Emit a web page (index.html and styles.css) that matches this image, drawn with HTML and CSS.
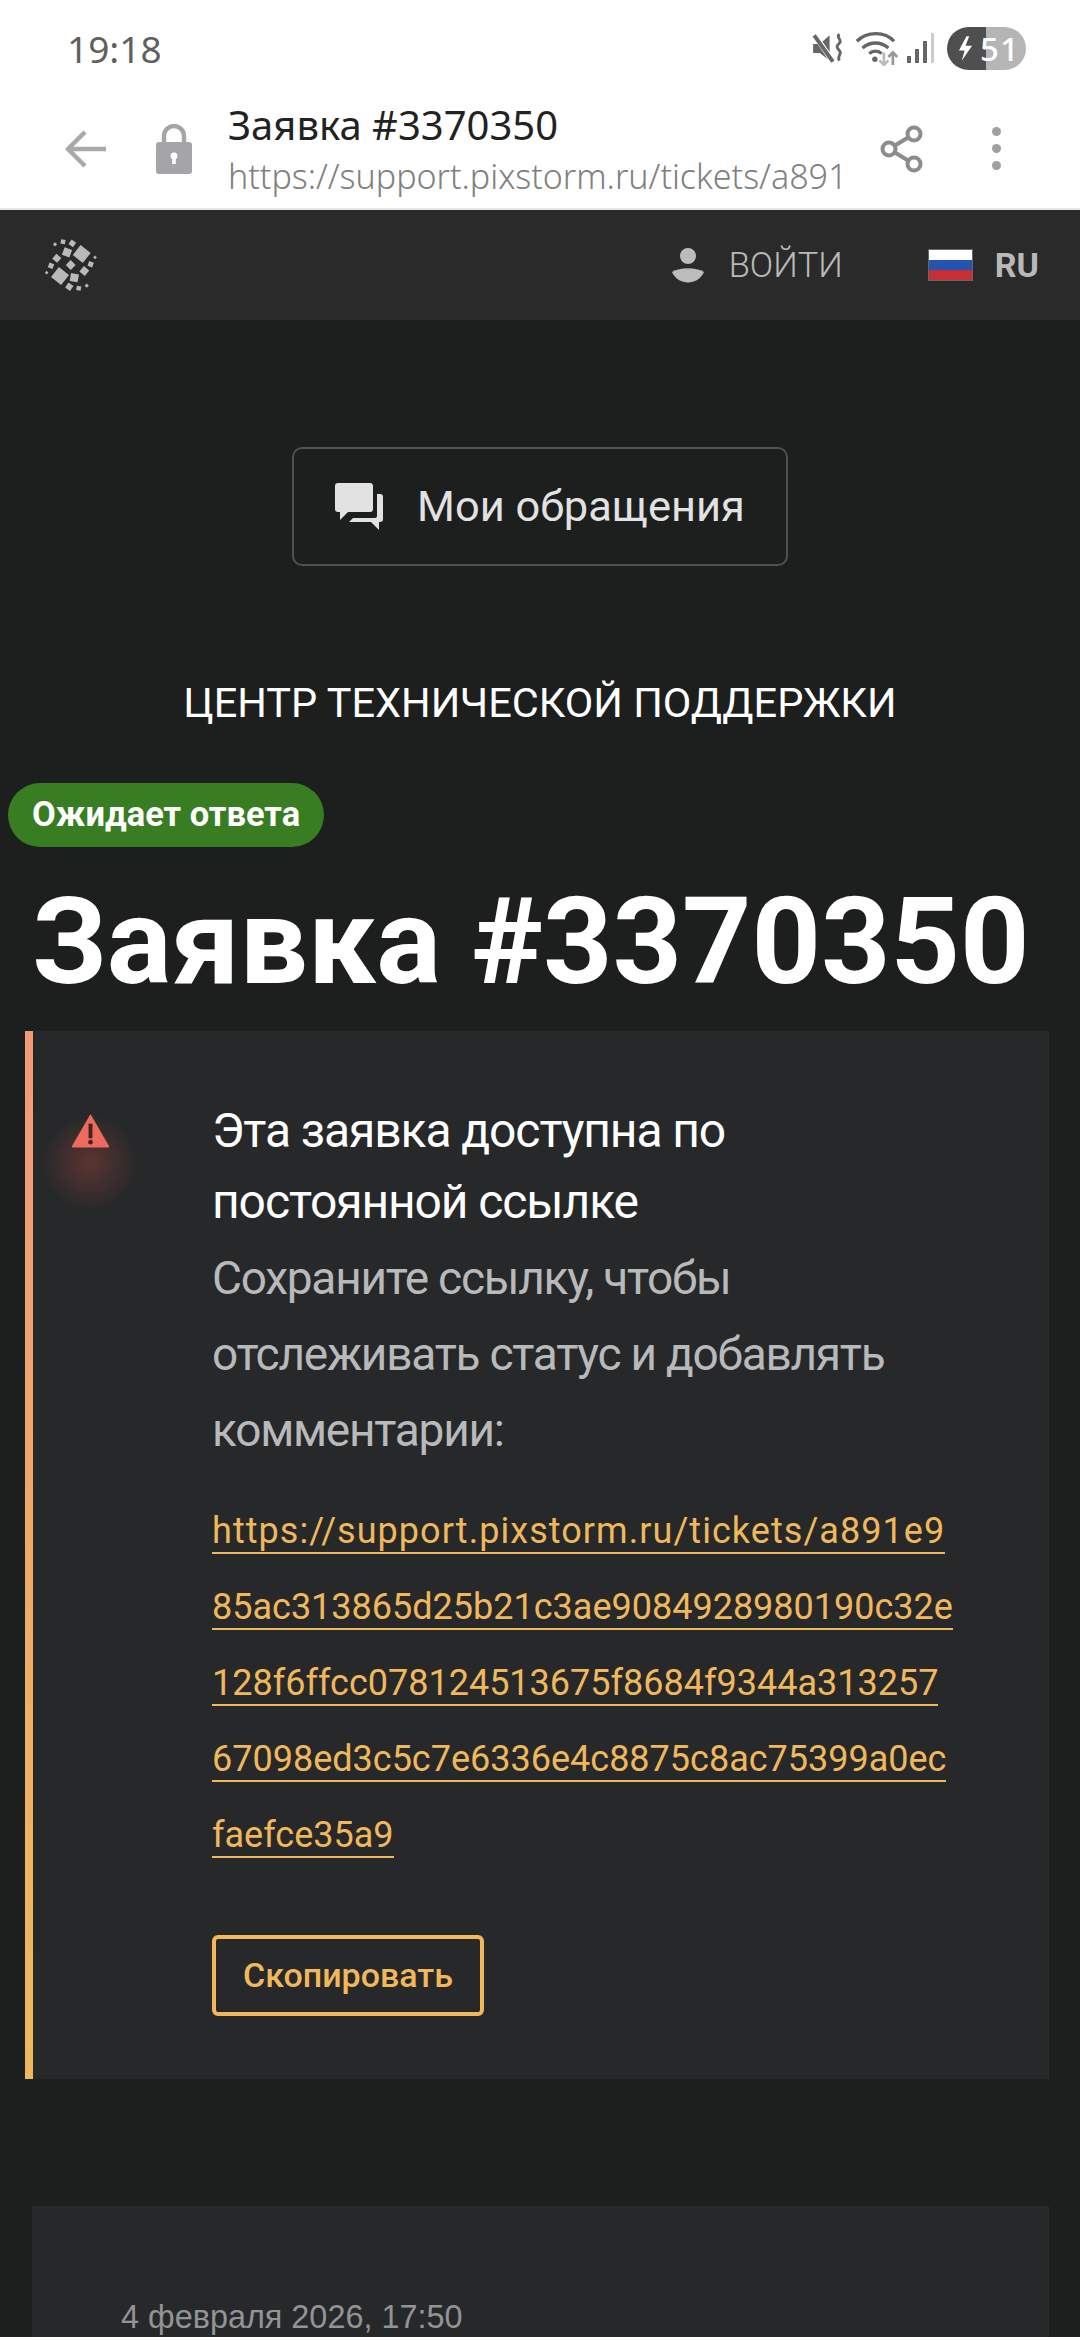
FILE: index.html
```html
<!DOCTYPE html>
<html lang="ru">
<head>
<meta charset="utf-8">
<title>Заявка #3370350</title>
<link rel="stylesheet" href="styles.css">
</head>
<body>
<div class="phone">
  <div class="statusbar">
    <span class="clock">19:18</span>
    <div class="status-icons">
      <svg class="i-mute" viewBox="0 0 30 30"><path d="M1 11h6l9-8v23l-9-7H1z" fill="#666"/><path d="M2 2l17 25" stroke="#fff" stroke-width="5"/><path d="M2 3l17 24" stroke="#666" stroke-width="3.5"/><path d="M25 2c-4 3 3 5 0 8s-3 4 0 7-3 5 0 9" fill="none" stroke="#666" stroke-width="2.6"/></svg>
      <svg class="i-wifi" viewBox="0 0 38 32"><g fill="none" stroke="#666" stroke-width="3"><path d="M2 10c9-9 25-9 33 0"/><path d="M7 16c7-6 16-6 23 0"/><path d="M13 21c3-3 8-3 11 0"/></g><circle cx="18" cy="26" r="2.4" fill="#666"/><g fill="none" stroke="#bbb" stroke-width="2.4"><path d="M26 20v11M22 27l4 4 4-4"/></g><g fill="none" stroke="#999" stroke-width="2.4"><path d="M34 31V20M30 24l4-4 4 4"/></g></svg>
      <svg class="i-signal" viewBox="0 0 28 30"><rect x="1" y="23" width="4" height="7" fill="#666"/><rect x="9" y="16" width="4" height="14" fill="#666"/><rect x="17" y="8" width="4" height="22" fill="#666"/><rect x="25" y="0" width="3" height="30" fill="#ccc"/></svg>
      <div class="battery"><svg class="i-bolt" viewBox="0 0 16 26"><path d="M9 0 1 15h6l-3 11 11-16H8l4-10z" fill="#fff"/></svg><span class="battery-num">51</span></div>
    </div>
  </div>
  <div class="urlbar">
    <svg class="i-back" viewBox="0 0 44 44"><path d="M43 22H6M22 5 5 22l17 17" fill="none" stroke="#a9a9ac" stroke-width="4.4"/></svg>
    <svg class="i-lock" viewBox="0 0 36 50"><path d="M8 20v-8a10 10 0 0 1 20 0v8" fill="none" stroke="#a5a5a8" stroke-width="4.4"/><path d="M3 18h30a3 3 0 0 1 3 3v26a3 3 0 0 1-3 3H3a3 3 0 0 1-3-3V21a3 3 0 0 1 3-3z" fill="#a5a5a8"/><circle cx="18" cy="32" r="3.4" fill="#fff"/><rect x="16.2" y="32" width="3.6" height="8" fill="#fff"/></svg>
    <div class="url-text">
      <div class="url-title">Заявка #3370350</div>
      <div class="url-addr">https://support.pixstorm.ru/tickets/a891</div>
    </div>
    <svg class="i-share" viewBox="0 0 44 48"><g fill="none" stroke="#8c8c8f" stroke-width="4"><circle cx="34" cy="9" r="6.5"/><circle cx="9" cy="24" r="6.5"/><circle cx="34" cy="39" r="6.5"/><path d="M15 20.500 28 12.500M15 27.500 28 35.500"/></g></svg>
    <div class="kebab"><i></i><i></i><i></i></div>
  </div>
  <header class="siteheader">
    <svg class="logo" viewBox="20 20 60 60"><g fill="#b9b9b9">
      <rect x="55.3" y="32.600" width="12.800" height="12.800" transform="rotate(38 61.700 39)"/>
      <rect x="33.600" y="54.600" width="12.800" height="12.800" transform="rotate(38 40 61)"/>
      <rect x="43" y="33.300" width="8" height="8" transform="rotate(20 47 37.300)"/>
      <rect x="33.500" y="40" width="6.500" height="6.500" transform="rotate(40 36.700 43.300)"/>
      <rect x="47.200" y="46.500" width="7" height="7" transform="rotate(45 50.700 50)"/>
      <rect x="28.500" y="48.200" width="5" height="5" transform="rotate(20 31 50.700)"/>
      <rect x="60.800" y="52.500" width="7" height="7" transform="rotate(40 64.300 56)"/>
      <rect x="50.300" y="58.700" width="8" height="8" transform="rotate(10 54.300 62.700)"/>
      <rect x="68.200" y="46.800" width="5" height="5" transform="rotate(20 70.700 49.300)"/>
      <rect x="46.300" y="68.700" width="6" height="6" transform="rotate(35 49.300 71.700)"/>
      <rect x="56.500" y="71" width="4.500" height="4.500" transform="rotate(10 58.700 73.300)"/>
      <rect x="65.200" y="69.200" width="3" height="3" transform="rotate(45 66.700 70.700)"/>
      <rect x="40.800" y="24.500" width="4.500" height="4.500" transform="rotate(10 43 26.700)"/>
      <rect x="49.600" y="25.600" width="5.500" height="5.500" transform="rotate(35 52.300 28.300)"/>
      <rect x="33.500" y="27.800" width="3" height="3" transform="rotate(45 35 29.300)"/>
      <rect x="73.700" y="41" width="2.600" height="2.600" transform="rotate(45 75 42.300)"/>
      <rect x="25.400" y="56.400" width="2.600" height="2.600" transform="rotate(45 26.700 57.700)"/>
    </g></svg>
    <div class="login">
      <svg class="i-user" viewBox="0 0 32 36"><circle cx="16" cy="9" r="8" fill="#bcbcbc"/><path d="M0 25c8-5 24-5 32 0-3 7-10 10.500-16 10.500S3 32 0 25z" fill="#bcbcbc"/></svg>
      <span>ВОЙТИ</span>
    </div>
    <div class="lang">
      <div class="flag"><i class="f-w"></i><i class="f-b"></i><i class="f-r"></i></div>
      <span>RU</span>
    </div>
  </header>
  <main class="content">
    <div class="btn-wrap">
      <a class="my-tickets">
        <svg class="i-chat" viewBox="0 0 48 48"><path d="M3 0h32a3 3 0 0 1 3 3v23a3 3 0 0 1-3 3H13l-8 8v-8H3a3 3 0 0 1-3-3V3a3 3 0 0 1 3-3z" fill="#e2e2e2"/><path d="M42 11h3a3 3 0 0 1 3 3v22a3 3 0 0 1-3 3h-1v8l-8-8H14l4-4h22a2 2 0 0 0 2-2z" fill="#e2e2e2"/></svg>
        <span>Мои обращения</span>
      </a>
    </div>
    <div class="center-title">ЦЕНТР ТЕХНИЧЕСКОЙ ПОДДЕРЖКИ</div>
    <div class="badge">Ожидает ответа</div>
    <h1 class="ticket-title">Заявка #3370350</h1>
    <section class="notice">
      <div class="notice-icon">
        <div class="glow"></div>
        <svg class="i-warn" viewBox="0 0 40 36"><path d="M20 1 39 34a1 1 0 0 1-1 1.500H2A1 1 0 0 1 1 34z" fill="#ee6a5c"/><rect x="18" y="11" width="4" height="15" fill="#3a2624"/><circle cx="20" cy="30" r="2.400" fill="#3a2624"/></svg>
      </div>
      <div class="notice-body">
        <div class="notice-head">Эта заявка доступна по<br>постоянной ссылке</div>
        <div class="notice-text">Сохраните ссылку, чтобы<br>отслеживать статус и добавлять<br>комментарии:</div>
        <div class="notice-links">
          <div class="link-url"><a>https://support.pixstorm.ru/tickets/a891e9</a></div>
          <div><a>85ac313865d25b21c3ae9084928980190c32e</a></div>
          <div><a>128f6ffcc078124513675f8684f9344a313257</a></div>
          <div><a>67098ed3c5c7e6336e4c8875c8ac75399a0ec</a></div>
          <div><a>faefce35a9</a></div>
        </div>
        <a class="copy">Скопировать</a>
      </div>
    </section>
    <section class="comment">
      <div class="comment-date">4 февраля 2026, 17:50</div>
    </section>
  </main>
  <div class="bottom-strip"></div>
</div>
</body>
</html>
```
FILE: styles.css
```css
* { box-sizing: border-box; }
html, body { margin: 0; padding: 0; background: #fff; }
.phone { width: 1080px; height: 2340px; display: flex; flex-direction: column; overflow: hidden; font-family: Roboto, "Noto Sans", sans-serif; }

.statusbar { height: 97px; flex: none; background: #fff; display: flex; align-items: center; justify-content: space-between; padding: 0 54px 1px 67px; }
.clock { font: 400 37px "Noto Sans", sans-serif; color: #5f5f5f; }
.status-icons { display: flex; align-items: center; }
.i-mute { width: 33px; height: 33px; margin-right: 9px; }
.i-wifi { width: 44px; height: 36px; margin-right: 8px; }
.i-signal { width: 28px; height: 30px; margin-right: 13px; }
.battery { width: 79px; height: 43px; border-radius: 22px; background: linear-gradient(90deg, #4f4f4f 0 39px, #b5b5b5 39px); display: flex; align-items: center; padding-left: 11px; color: #fff; }
.i-bolt { width: 15px; height: 25px; margin-right: 7px; }
.battery-num { font: 500 33px "Noto Sans", sans-serif; letter-spacing: 1px; }

.urlbar { height: 113px; flex: none; background: #fff; border-bottom: 2px solid #e6e6e6; display: flex; align-items: center; padding: 0 0 8px 63px; }
.i-back { width: 44px; height: 44px; flex: none; margin-right: 49px; }
.i-lock { width: 36px; height: 50px; flex: none; margin-right: 36px; }
.url-text { width: 615px; flex: none; }
.url-title { font: 400 40px/54px "Noto Sans", sans-serif; color: #222; }
.url-addr { font: 300 34px/48px "Noto Sans", sans-serif; color: #808080; white-space: nowrap; }
.i-share { width: 44px; height: 48px; flex: none; margin-left: 37px; }
.kebab { display: flex; flex-direction: column; gap: 8px; margin-left: 68px; }
.kebab i { display: block; width: 9px; height: 9px; border-radius: 50%; background: #a0a0a3; }

.siteheader { height: 110px; flex: none; background: #2a2a2a; display: flex; align-items: center; padding: 0 41px 0 40px; color: #b9b9b9; }
.logo { width: 60px; height: 60px; flex: none; margin-right: auto; }
.login { display: flex; align-items: center; gap: 25px; font-size: 34.5px; font-weight: 300; }
.i-user { width: 32px; height: 36px; }
.lang { display: flex; align-items: center; gap: 22px; margin-left: 85px; font-size: 34px; font-weight: 700; }
.flag { width: 45px; height: 32px; display: flex; flex-direction: column; border: 1px solid #666; }
.flag i { flex: 1; display: block; }
.f-w { background: #fff; }
.f-b { background: #2453b0; }
.f-r { background: #c62f36; }

.content { flex: 1; min-height: 0; overflow: hidden; background: #1d1e1e; padding-top: 127px; }
.btn-wrap { display: flex; justify-content: center; }
.my-tickets { width: 496px; height: 119px; border: 2px solid #505052; border-radius: 10px; display: flex; align-items: center; padding-left: 41px; color: #e2e2e2; font-size: 43.4px; gap: 34px; }
.i-chat { width: 48px; height: 48px; }
.center-title { margin-top: 112px; text-align: center; color: #fff; font-size: 41.5px; font-weight: 400; line-height: 50px; }
.badge { margin: 55px 0 0 8px; width: 316px; height: 64px; border-radius: 32px; background: #387d22; color: #fff; font-size: 34.5px; font-weight: 700; line-height: 62px; padding-left: 24px; }
.ticket-title { margin: 24px 0 0 32px; font-size: 121.2px; line-height: 142px; font-weight: 700; color: #fff; white-space: nowrap; }
.notice { margin: 18px 31px 0 25px; height: 1048px; background: #27282a; border-left: 8px solid; border-image: linear-gradient(180deg, #f19a78, #f0b85a) 1; display: flex; padding: 0 0 0 38px; }
.notice-icon { width: 39px; flex: none; margin-right: 102px; padding-top: 82px; position: relative; }
.i-warn { width: 39px; height: 35px; display: block; position: relative; }
.glow { position: absolute; left: -31px; top: 82px; width: 100px; height: 100px; background: radial-gradient(circle, rgba(238,90,70,.26), rgba(238,90,70,0) 68%); }
.notice-body { flex: 1; padding-top: 64px; }
.notice-head { font-size: 48px; line-height: 71px; color: #fff; font-stretch: 90%; letter-spacing: -1.1px; }
.notice-text { font-size: 46px; line-height: 76px; color: #b8b9bb; padding-top: 3px; letter-spacing: -1.25px; }
.notice-links { margin-top: 25px; font-size: 36px; line-height: 76px; color: #f0b85a; white-space: nowrap; }
.notice-links a { border-bottom: 2px solid #f0b85a; }
.link-url { letter-spacing: 1.05px; }
.copy { display: inline-block; margin-top: 62px; height: 81px; width: 272px; border: 4px solid #f0b85a; border-radius: 6px; color: #f0b85a; font-size: 34px; font-weight: 500; line-height: 73px; text-align: center; }
.comment { margin: 127px 31px 0 32px; height: 300px; background: #27282a; padding: 89px 0 0 89px; }
.comment-date { font-family: "Liberation Sans", sans-serif; font-size: 32.4px; color: #939496; line-height: 44px; }
.bottom-strip { height: 3px; flex: none; background: #fff; }
```
